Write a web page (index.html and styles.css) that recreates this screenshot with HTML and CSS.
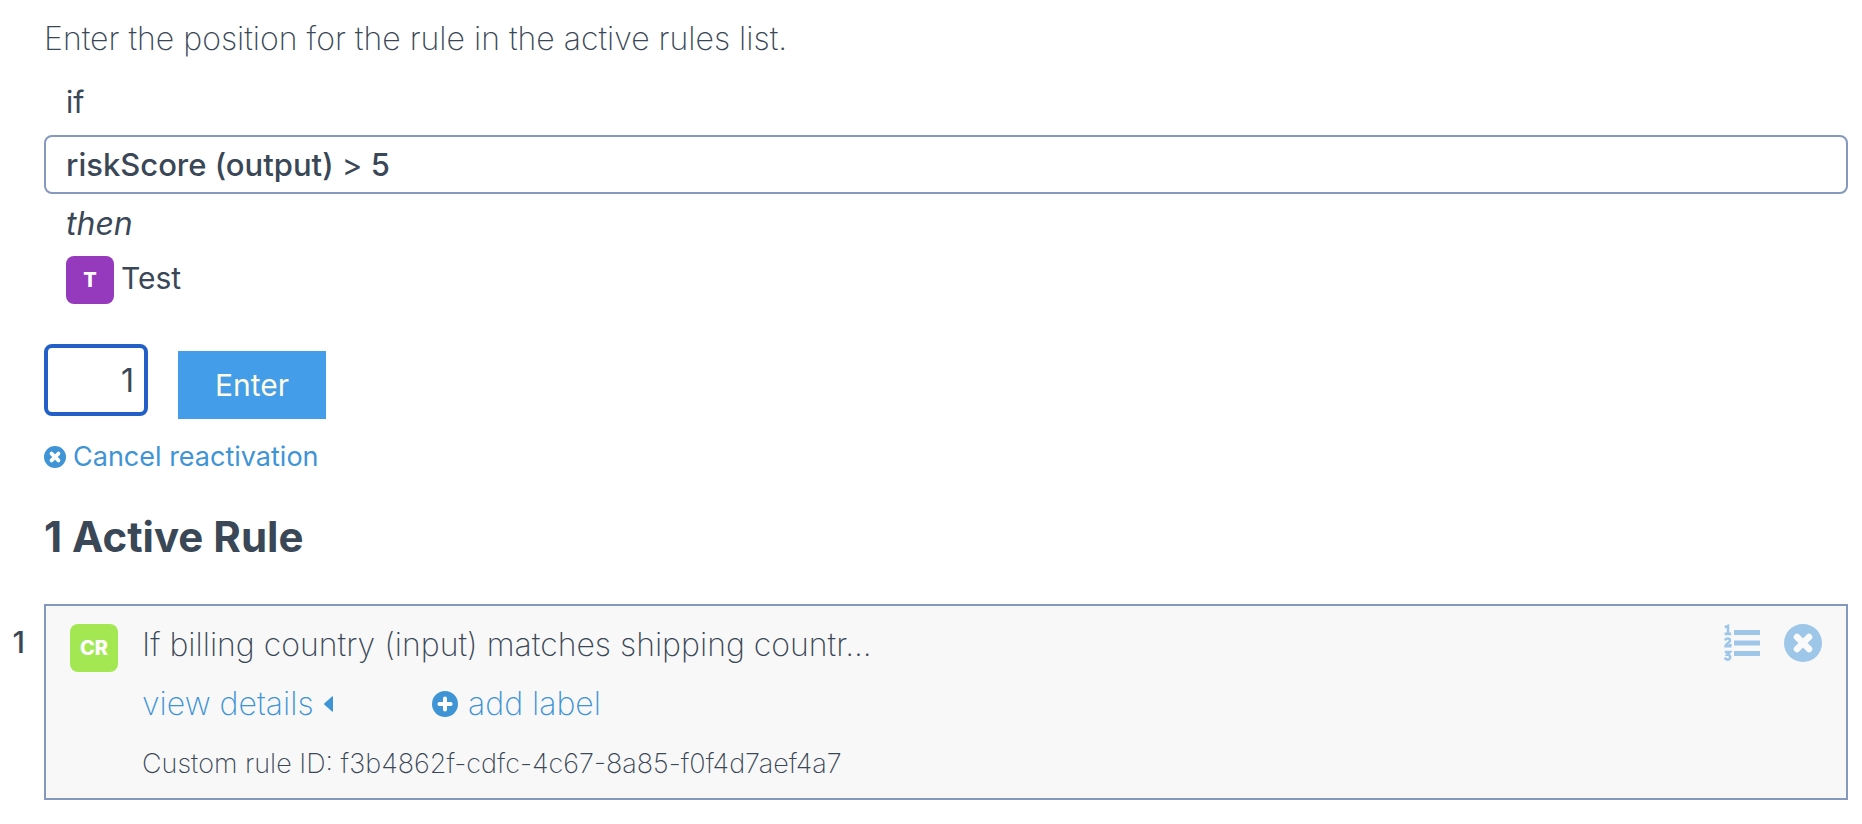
FILE: index.html
```html
<!DOCTYPE html>
<html lang="en">
<head>
<meta charset="utf-8">
<title>Reactivate rule</title>
<link rel="stylesheet" href="styles.css">
</head>
<body>
<main class="page">
  <section class="reactivate">
    <p class="intro"><label for="position">Enter the position for the rule in the active rules list.</label></p>
    <p class="keyword">if</p>
    <div class="condition">riskScore (output) <span class="operator">&gt;</span> 5</div>
    <p class="keyword keyword-then">then</p>
    <div class="outcome"><span class="badge badge-test">T</span><span class="outcome-name">Test</span></div>
    <form class="position-form">
      <input class="position-input" id="position" type="text" inputmode="numeric" value="1">
      <button class="enter-button" type="button">Enter</button>
    </form>
    <a class="cancel" href="#">
      <svg class="cancel-icon" viewBox="0 0 38 38" aria-hidden="true"><circle cx="19" cy="19" r="19" fill="currentColor"/><path d="M13 13l12 12M25 13L13 25" stroke="#fff" stroke-width="6.6" stroke-linecap="round"/></svg>
      <span class="cancel-text">Cancel reactivation</span>
    </a>
  </section>
  <h2 class="heading">1 Active Rule</h2>
  <div class="rule-row">
    <span class="rule-number">1</span>
    <article class="rule">
      <span class="badge badge-custom">CR</span>
      <div class="rule-body">
        <p class="rule-title">If billing country (input) matches shipping countr...</p>
        <div class="rule-links">
          <a class="link" href="#"><span>view details</span><svg class="caret" viewBox="0 0 9 16" aria-hidden="true"><path d="M8 0.4Q9 0 9 1V15Q9 16 8 15.6L.5 8.8Q-.2 8 .5 7.2z" fill="currentColor"/></svg></a>
          <a class="link" href="#"><svg class="plus" viewBox="0 0 26 26" aria-hidden="true"><circle cx="13" cy="13" r="13" fill="currentColor"/><path d="M13 7.4v11.2M7.4 13h11.2" stroke="#fff" stroke-width="4" stroke-linecap="round"/></svg><span>add label</span></a>
        </div>
        <p class="rule-id">Custom rule ID: f3b4862f-cdfc-4c67-8a85-f0f4d7aef4a7</p>
      </div>
      <div class="actions">
        <button class="icon-button" type="button" aria-label="Reorder rule">
          <svg class="list-icon" viewBox="0 0 36 38" aria-hidden="true"><g fill="none" stroke="currentColor" stroke-width="2.6"><path d="M.8 3.2L4 2v8M.6 9.900h6.600"/><path d="M1.200 16.400C1.800 13.600 6.200 14 6 16.600C5.800 19 1.600 19.800 1.500 22.300H7.400M6.400 22.500v-2.600"/><path d="M.8 28.100H5.800L3.400 30.800C7.200 31 6.900 35.600 3.800 35.600Q1.400 35.600 1 33.600"/></g><path d="M10 6h26v5H10zM10 16.500h26v5H10zM10 27h26v5H10z" fill="currentColor"/></svg>
        </button>
        <button class="icon-button" type="button" aria-label="Deactivate rule">
          <svg class="remove-icon" viewBox="0 0 38 38" aria-hidden="true"><circle cx="19" cy="19" r="19" fill="currentColor"/><path d="M13 13l12 12M25 13L13 25" stroke="#fafafa" stroke-width="6.6" stroke-linecap="round"/></svg>
        </button>
      </div>
    </article>
  </div>
</main>
</body>
</html>
```
FILE: styles.css
```css
* { box-sizing: border-box; }
body {
  margin: 0;
  background: #fff;
  color: #394756;
  font-family: Inter, "Open Sans", sans-serif;
  font-size: 30px;
  font-weight: 400;
}
p, h2 { margin: 0; }
.page { padding: 16px 14px 24px 0; }
.reactivate { padding-left: 44px; }
.intro { font-size: 32px; font-weight: 200; line-height: 46px; }
.keyword { margin-top: 16px; padding-left: 22px; line-height: 48px; }
.condition {
  margin-top: 9px;
  padding: 0 20px;
  border: 2px solid #8499bb;
  border-radius: 8px;
  font-size: 31px;
  font-weight: 500;
  line-height: 55px;
}
.operator { font-weight: 400; }
.keyword-then { margin-top: 10px; font-size: 32px; line-height: 40px; font-style: italic; }
.outcome { display: flex; gap: 7px; margin-top: 12px; padding-left: 22px; }
.outcome-name { line-height: 44px; }
.badge {
  flex: none;
  width: 48px;
  height: 48px;
  border-radius: 8px;
  color: #fff;
  font-size: 20px;
  font-weight: 800;
  line-height: 48px;
  text-align: center;
}
.badge-test { background: #9539bd; }
.badge-custom { background: #a3e852; }
.position-form { display: flex; align-items: flex-end; gap: 30px; margin-top: 40px; }
.position-input {
  width: 104px;
  height: 72px;
  margin-bottom: 3px;
  padding: 0 10px;
  border: 4px solid #2260c8;
  border-radius: 8px;
  outline: none;
  background: #fff;
  color: inherit;
  font: inherit;
  font-size: 32px;
  text-align: right;
}
.enter-button {
  width: 148px;
  height: 68px;
  padding: 0;
  border: 0;
  background: #449de8;
  color: #fffbe0;
  font: inherit;
}
.cancel { display: flex; align-items: center; gap: 7px; width: fit-content; margin-top: 18px; color: #3f94d5; font-size: 27px; line-height: 40px; text-decoration: none; }
.cancel-icon { width: 22px; height: 22px; }
.heading { margin-top: 34px; padding-left: 44px; font-size: 42px; font-weight: 700; line-height: 52px; }
.rule-row { display: grid; grid-template-columns: 44px 1fr; margin-top: 41px; }
.rule-number { padding-top: 14px; padding-right: 19px; font-weight: 500; line-height: 48px; text-align: right; }
.rule { display: flex; align-items: flex-start; padding: 18px 24px 10px; border: 2px solid #8499bb; background: #f8f8f8; }
.rule-body { flex: 1; margin-left: 24px; font-weight: 200; line-height: 48px; }
.rule-title { font-size: 32px; line-height: 42px; }
.rule-links { display: grid; grid-template-columns: 290px auto; justify-content: start; margin-top: 14px; }
.link { display: flex; align-items: center; gap: 10px; color: #3f94d5; font-size: 32px; line-height: 48px; text-decoration: none; }
.caret { width: 9px; height: 16px; }
.plus { width: 26px; height: 26px; }
.rule-id { margin-top: 12px; font-size: 27px; line-height: 48px; }
.actions { display: flex; gap: 24px; }
.icon-button { display: flex; padding: 0; border: 0; background: none; color: #9dc6e8; }
.list-icon { width: 36px; height: 38px; }
.remove-icon { width: 38px; height: 38px; }
```
